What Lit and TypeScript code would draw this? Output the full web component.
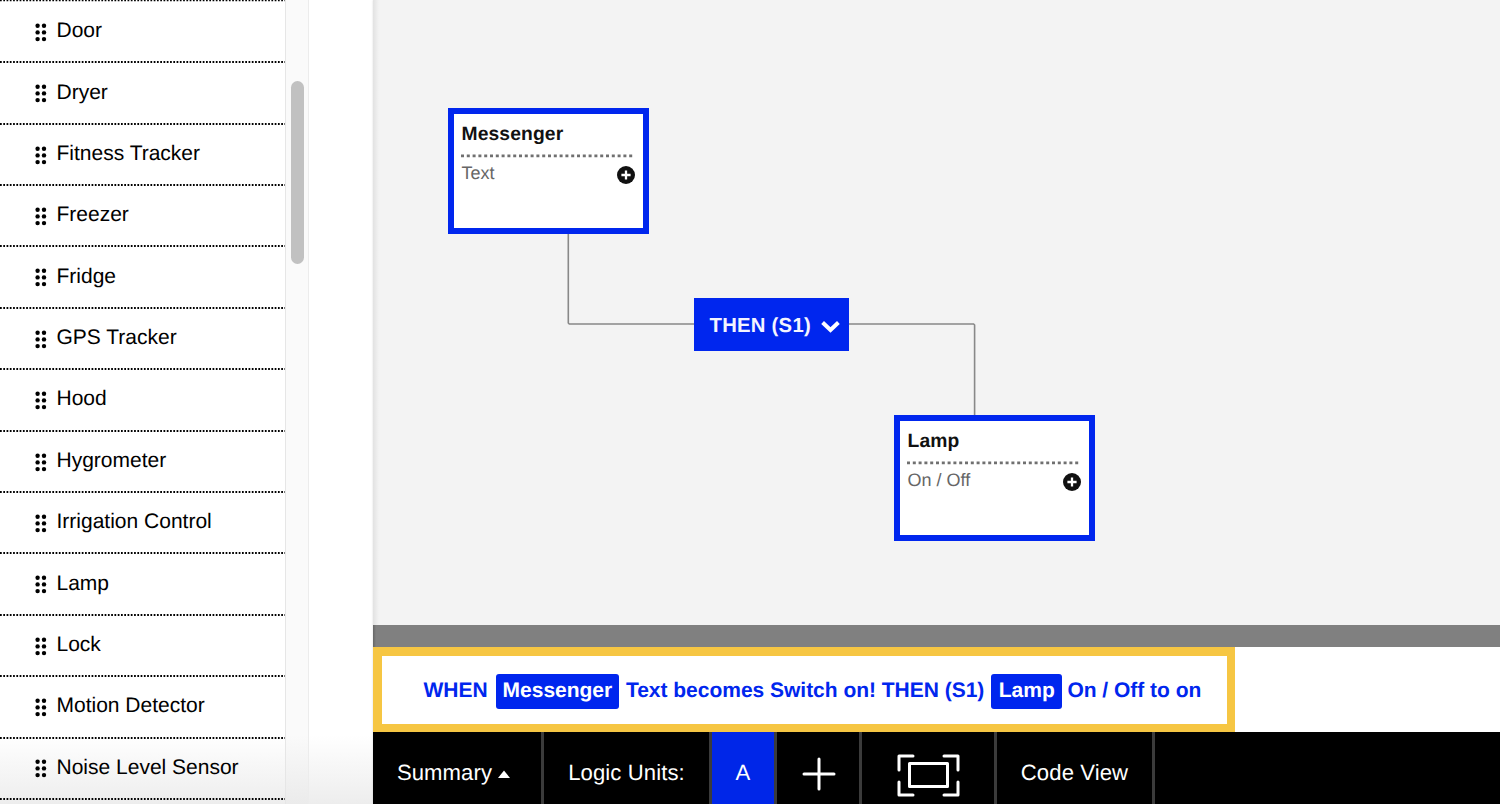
import { LitElement, html, css, svg } from "lit";
import { customElement, property } from "lit/decorators.js";

@customElement("device-item")
class DeviceItem extends LitElement {
  @property() label = "";
  static styles = css`
    :host { display: flex; flex-direction: column; height: 61.4px; }
    .row { flex: 1; display: flex; align-items: center; padding-left: 34.5px; gap: 10px; }
    .grip { width: 12px; height: 19px; fill: #000; flex: none; margin-top: 1.4px; }
    .label { font-size: 21px; line-height: 24px; white-space: nowrap; margin-top: -0.9px; }
    .dots { display: block; width: 285px; height: 2px; stroke: #000; stroke-width: 1.8; stroke-dasharray: 1.75 1.52; }
  `;
  render() {
    return html`<div class="row"><svg class="grip" viewBox="0 0 12 19">
        ${[2.7, 9.4, 16.1].map((y) => svg`<circle cx="2.6" cy=${y} r="2.2"/><circle cx="9" cy=${y} r="2.2"/>`)}
      </svg><span class="label">${this.label}</span></div>
      <svg class="dots"><path d="M0 1H285"/></svg>`;
  }
}

@customElement("device-node")
class DeviceNode extends LitElement {
  @property() name = "";
  @property() capability = "";
  static styles = css`
    :host { display: block; box-sizing: border-box; width: 201px; height: 126px; border: 6px solid #0026ee; background: #fff; padding: 7px 8px 0 7.5px; }
    .name { font-weight: 700; font-size: 19.3px; line-height: 28px; letter-spacing: 0.12px; color: #111; }
    .rule { display: block; width: 174px; height: 4px; margin: 5px 0 0 -0.5px; stroke: #707070; stroke-width: 2.7; stroke-dasharray: 3 2.8; }
    .row { display: flex; justify-content: space-between; align-items: center; height: 34px; }
    .cap { font-size: 18px; color: #666; margin-top: -4px; }
    .add { width: 18px; height: 18px; margin-top: 0; }
  `;
  render() {
    return html`<div class="name">${this.name}</div><svg class="rule"><path d="M0 1.8H174"/></svg>
      <div class="row"><span class="cap">${this.capability}</span>
        <svg class="add" viewBox="0 0 18 18"><circle cx="9" cy="9" r="9" fill="#111"/><path d="M9 4.4v9.2M4.4 9h9.2" stroke="#fff" stroke-width="2.3"/></svg>
      </div>`;
  }
}

const DEVICES = ["Door", "Dryer", "Fitness Tracker", "Freezer", "Fridge", "GPS Tracker", "Hood", "Hygrometer",
  "Irrigation Control", "Lamp", "Lock", "Motion Detector", "Noise Level Sensor"];

@customElement("app-root")
class AppRoot extends LitElement {
  static styles = css`
    :host { display: flex; height: 804px; width: 1500px; overflow: hidden; background: #fff; color: #000;
      font-family: "Liberation Sans", Arial, sans-serif; text-rendering: geometricPrecision; }
    .side { display: flex; width: 373px; flex: none; background: linear-gradient(#fff0 735px, #ededed 804px); }
    .list { width: 285px; }
    .top { display: block; width: 285px; height: 1.9px; stroke: #000; stroke-width: 1.6; stroke-dasharray: 1.75 1.52; }
    .track { width: 24px; box-sizing: border-box; border-left: 1.5px solid #e6e6e6; border-right: 1px solid #ececec; background: linear-gradient(#fafafa 735px, #ebebeb); padding: 81px 0 0 5px; }
    .thumb { width: 13px; height: 183px; border-radius: 7px; background: #c1c1c1; }
    .main { flex: 1; display: flex; flex-direction: column; min-width: 0; box-shadow: 0 0 2px #0002; }
    .canvas { position: relative; height: 625px; background: linear-gradient(90deg, #e2e2e2, #f3f3f3 6px); }
    .wires { position: absolute; left: 0; top: 0; width: 1127px; height: 625px; fill: none; stroke: #888; stroke-width: 1.6; }
    .node { position: absolute; }
    .messenger { left: 75px; top: 108px; }
    .lamp { left: 521px; top: 415px; }
    .then { position: absolute; left: 321px; top: 298px; width: 155px; height: 53px; box-sizing: border-box; padding: 3px 9px 0 15.5px; background: #0026ee; color: #f3f4ff; display: flex; align-items: center; justify-content: space-between; font-weight: 700; font-size: 20.3px; letter-spacing: 0.25px; white-space: nowrap; }
    .chev { width: 19px; height: 13px; fill: none; stroke: #fff; stroke-width: 4; margin-top: 1px; }
    .splitter { height: 22px; background: linear-gradient(90deg, #666, #808080 3px); }
    .summary { height: 85px; display: flex; background: #fff; }
    .sentence { box-sizing: border-box; width: 862px; border: 8.4px solid #f6c643; border-left-width: 9px; border-top-width: 9px; padding: 2px 0 0 41.5px; display: flex; align-items: center; color: #0026ee; font-weight: 700; font-size: 21px; letter-spacing: -0.02px; white-space: nowrap; }
    .chip { height: 35px; line-height: 34px; box-sizing: border-box; padding: 0 6.8px; border-radius: 3px; background: #0026ee; color: #fff; margin: 1px 7px 0 2.4px; }
    .chip.second { margin-left: 1.4px; margin-right: 5.4px; padding: 0 7.3px; }
    .bar { height: 72px; display: flex; background: #000; color: #fff; font-size: 22.1px; letter-spacing: 0.1px; white-space: nowrap; }
    .cell { box-sizing: border-box; display: flex; align-items: center; justify-content: center; border-right: 3px solid #3b3b3b; padding-top: 10px; }
    .c1 { width: 171px; padding-right: 7px; } .c2 { width: 168px; } .c3 { width: 65px; background: #0026e8; } .c4 { width: 85px; } .c5 { width: 135px; } .c6 { width: 158px; }
    .tri { width: 12px; height: 8px; fill: #fff; margin: 2px 0 0 6px; }
    .icon { fill: none; stroke: #fff; stroke-width: 3; stroke-linecap: round; stroke-linejoin: round; }
    .plus { width: 34px; height: 34px; margin: 2px 0 0 1px; }
    .fit { width: 63px; height: 43px; margin: 4px 0 0 0; }
  `;
  render() {
    return html`
      <nav class="side">
        <div class="list"><svg class="top"><path d="M0 0.5H285"/></svg>${DEVICES.map((d) => html`<device-item .label=${d}></device-item>`)}</div>
        <div class="track"><div class="thumb"></div></div>
      </nav>
      <main class="main">
        <section class="canvas">
          <svg class="wires"><path d="M195.3 230V323L196.3 324H600.6L601.6 325V418"/></svg>
          <device-node class="node messenger" .name=${"Messenger"} .capability=${"Text"}></device-node>
          <div class="then">THEN (S1)<svg class="chev" viewBox="0 0 19 13"><path d="M1.6 2.5L9.5 10L17.4 2.5"/></svg></div>
          <device-node class="node lamp" .name=${"Lamp"} .capability=${"On / Off"}></device-node>
        </section>
        <div class="splitter"></div>
        <section class="summary"><div class="sentence"><span>WHEN&nbsp;</span><span class="chip">Messenger</span><span>Text becomes Switch on! THEN (S1)&nbsp;</span><span class="chip second">Lamp</span><span>On / Off to on</span></div></section>
        <footer class="bar">
          <div class="cell c1">Summary<svg class="tri" viewBox="0 0 12 8"><path d="M0 8L6 0.5L12 8z"/></svg></div>
          <div class="cell c2">Logic Units:</div>
          <div class="cell c3">A</div>
          <div class="cell c4"><svg class="icon plus" viewBox="0 0 34 34"><path d="M17 2v30M2 17h30"/></svg></div>
          <div class="cell c5"><svg class="icon fit" viewBox="0 0 63 43"><path d="M16 2H2V16M47 2H61V16M2 28V41H16M61 28V41H47M12.5 9.5H50.5V32.5H12.5z"/></svg></div>
          <div class="cell c6">Code View</div>
        </footer>
      </main>`;
  }
}
